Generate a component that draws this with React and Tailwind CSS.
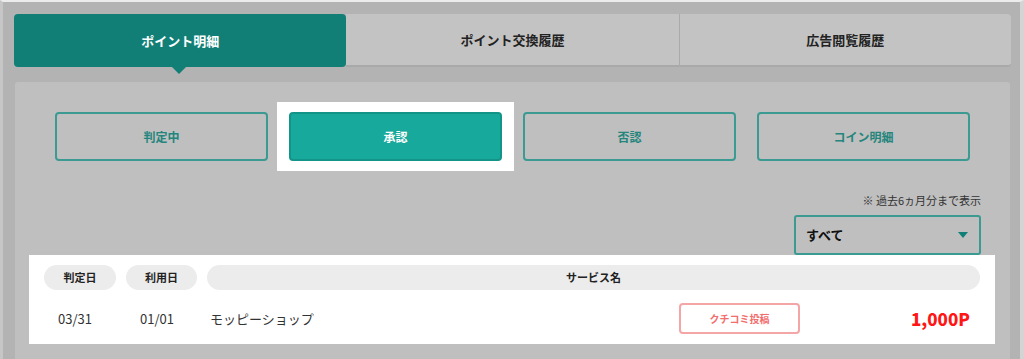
import React from 'react';

const FONT = { fontFamily: '"Noto Sans CJK JP", "Noto Sans", sans-serif' };

const tabs = ['ポイント明細', 'ポイント交換履歴', '広告閲覧履歴'];
const filters = ['判定中', '承認', '否認', 'コイン明細'];

export default function App() {
  return (
    <div className="w-[1024px] h-[359px] overflow-hidden bg-[#b3b3b3] border-t-2 border-t-[#ececec] border-l-[3px] border-l-[#c6c6c6] border-r-[4px] border-r-[#d4d4d4]" style={FONT}>
      <div className="pl-[11px] pr-[6px] pt-[12px]">
        <div className="grid grid-cols-3 w-[997px] h-[53px]">
          {tabs.map((t, i) => (
            <div
              key={t}
              className={`relative flex items-center justify-center text-[13px] font-bold ${
                i === 0
                  ? 'bg-[#127f77] text-white rounded-[4px]'
                  : 'bg-[#c3c3c3] text-[#222] border-b-2 border-[#a9a9a9]' + (i === 2 ? ' rounded-r-[4px] border-l border-l-[#aaaaaa]' : '')
              }`}
            >
              {t}
              {i === 0 && (
                <span className="absolute left-[158px] top-full w-0 h-0 border-l-[7px] border-r-[7px] border-t-[7px] border-l-transparent border-r-transparent border-t-[#127f77]" />
              )}
            </div>
          ))}
        </div>

        <div className="mt-[15px] ml-[1px] w-[995px] h-[300px] bg-[#bfbfbf] rounded-t-[3px]">
          <div className="flex gap-[21px] pl-[40px] pt-[30px]">
            {filters.map((f, i) =>
              i === 1 ? (
                <div key={f} className="-mx-[12px] -my-[10px] px-[12px] py-[10px] bg-white">
                  <div className="w-[213px] h-[49px] flex items-center justify-center rounded-[4px] text-[12px] font-bold bg-[#17a99b] text-white border-2 border-[#139488]">
                    {f}
                  </div>
                </div>
              ) : (
                <div
                  key={f}
                  className="w-[213px] h-[49px] flex items-center justify-center rounded-[4px] text-[12px] font-bold border-2 border-[#3b9a91] text-[#23857c]"
                >
                  {f}
                </div>
              )
            )}
          </div>

          <div className="flex flex-col items-end pr-[29px] mt-[31px]">
            <p className="text-[11px] text-[#333] leading-[16px]">※ 過去6ヵ月分まで表示</p>
            <div className="mt-[7px] w-[187px] h-[40px] border-2 border-[#3b9a91] rounded-[3px] flex items-center justify-between pl-[10px] pr-[11px]">
              <span className="text-[13px] font-bold text-[#111]">すべて</span>
              <span className="w-0 h-0 border-l-[5px] border-r-[5px] border-t-[6px] border-l-transparent border-r-transparent border-t-[#127f77]" />
            </div>
          </div>

          <div className="ml-[14px] w-[966px] h-[89px] bg-white px-[15px] pt-[10px]">
            <div className="flex gap-[10px] text-[11px] font-bold text-[#222]">
              <div className="w-[72px] h-[25px] rounded-full bg-[#ececec] flex items-center justify-center">判定日</div>
              <div className="w-[71px] h-[25px] rounded-full bg-[#ececec] flex items-center justify-center">利用日</div>
              <div className="flex-1 h-[25px] rounded-full bg-[#ececec] flex items-center justify-center">サービス名</div>
            </div>
            <div className="flex items-center h-[31px] mt-[13px] text-[13px] text-[#333]">
              <span className="w-[72px] pl-[14px]">03/31</span>
              <span className="w-[82px] pl-[24px]">01/01</span>
              <span className="ml-[12px] flex-1">モッピーショップ</span>
              <div className="w-[121px] h-[31px] border-2 border-[#f4a5a5] rounded-[4px] flex items-center justify-center text-[10px] font-bold text-[#f26d6d]">
                クチコミ投稿
              </div>
              <span className="w-[180px] text-right pr-[10px] text-[17px] font-black text-[#ff1717]">1,000P</span>
            </div>
          </div>
        </div>
      </div>
    </div>
  );
}
